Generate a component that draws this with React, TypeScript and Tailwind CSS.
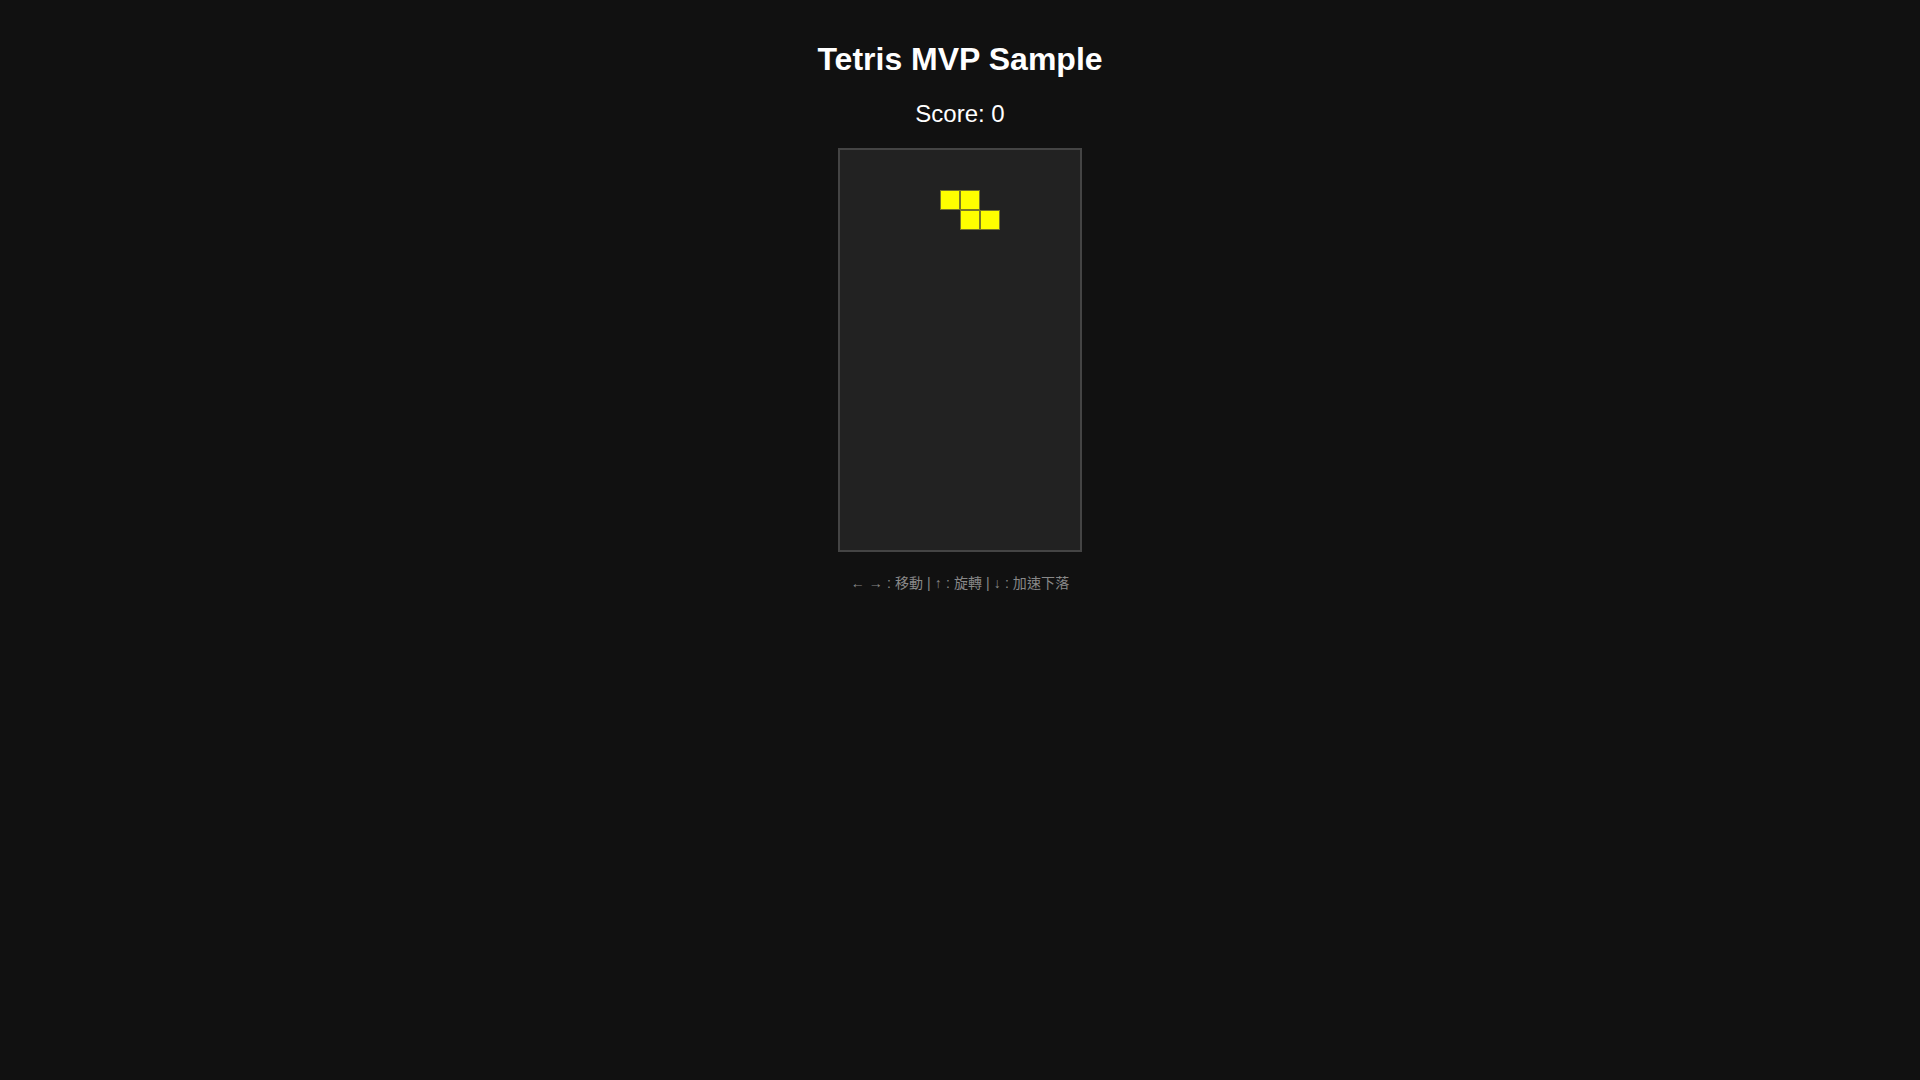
const piece = [
  { col: "col-start-6", row: "row-start-3" },
  { col: "col-start-7", row: "row-start-3" },
  { col: "col-start-7", row: "row-start-4" },
  { col: "col-start-8", row: "row-start-4" },
];

export default function App() {
  return (
    <div className="min-h-screen bg-[#111111] pt-[41px] text-center font-['Liberation_Sans',Arial,sans-serif] text-white">
      <h1 className="m-0 text-[32px] font-bold leading-[37px]">Tetris MVP Sample</h1>
      <div className="mt-[22px] text-[24px] leading-[28px]">Score: 0</div>
      <div className="mt-[20px] flex justify-center">
        <div className="grid h-[404px] w-[244px] grid-cols-[repeat(12,20px)] grid-rows-[repeat(20,20px)] border-2 border-[#444444] bg-[#222222]">
          {piece.map((c, i) => (
            <div
              key={i}
              className={`${c.col} ${c.row} box-border h-5 w-5 border border-[#77772a] bg-[#ffff00]`}
            />
          ))}
        </div>
      </div>
      <p className="mt-[21px] text-[14px] leading-[20px] tracking-[0.1px] text-[#888888] font-['Liberation_Sans','Noto_Sans_CJK_TC',sans-serif]">
        ← → : 移動 | ↑ : 旋轉 | ↓ : 加速下落
      </p>
    </div>
  );
}
